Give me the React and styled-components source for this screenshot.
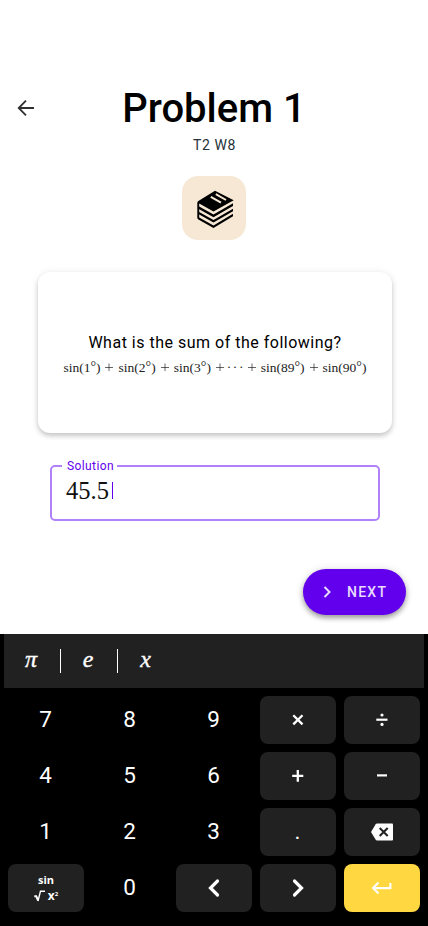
import React from "react";
import styled, { createGlobalStyle } from "styled-components";

const Global = createGlobalStyle`
  *, *::before, *::after { box-sizing: border-box; }
  body { margin: 0; background: #fff; font-family: Roboto, sans-serif; }
  button { font: inherit; border: 0; padding: 0; margin: 0; }
`;
const Screen = styled.div`
  width: 428px; height: 926px; display: flex; flex-direction: column;
  background: #fff; overflow: hidden;
`;
const Content = styled.main`
  height: 634px; padding-top: 84px; display: flex; flex-direction: column; align-items: center;
`;
const Header = styled.header`
  width: 100%; height: 48px; padding: 0 14px; display: grid;
  grid-template-columns: 24px 1fr 24px; grid-template-rows: 48px; align-items: center;
`;
const BackButton = styled.button`
  width: 24px; height: 24px; background: none; color: #303030;
`;
const Title = styled.h1`
  margin: 0; height: 48px; text-align: center; font-size: 40px; line-height: 48px; font-weight: 500;
  color: #000; white-space: nowrap; padding-top: 1px;
`;
const Subtitle = styled.div`
  margin-top: 3px; height: 20px; line-height: 20px; font-size: 14px; letter-spacing: 0.6px; color: #263238;
  padding-left: 1px;
`;
const BookTile = styled.div`
  margin-top: 21px; width: 64px; height: 64px; border-radius: 16px; background: #f7e8d5;
  svg { display: block; }
`;
const Card = styled.section`
  margin: 32px 0 0 2px; width: 354px; height: 161px; padding-top: 60px; border-radius: 12px; background: #fff;
  box-shadow: 0 3px 5px rgba(0,0,0,.2), 0 0 10px rgba(0,0,0,.06);
  display: flex; flex-direction: column; align-items: center;
`;
const Question = styled.p`
  margin: 0; font-size: 16px; line-height: 21px; letter-spacing: 0.5px; color: #000; white-space: nowrap;
`;
const Formula = styled.div`
  margin-top: 4px; display: flex; align-items: center; gap: 4.4px; height: 20px;
  font: 13.5px/20px "Liberation Serif", serif; color: #222;
`;
const Term = styled.span`
  width: ${(p) => p.$w}px; display: flex; justify-content: center; white-space: nowrap;
  letter-spacing: ${(p) => p.$ls || "0"}px;
  sup { font-size: 14px; line-height: 20px; vertical-align: 1px; }
`;
const Field = styled.fieldset`
  margin: 26px 0 0 2px; width: 330px; height: 62px; padding: 0 0 0 14px; border: 2px solid #b181f9;
  border-radius: 5px; min-width: 0;
`;
const Legend = styled.legend`
  margin-left: -4px; padding: 0 3px 0 5px; font-size: 12px; line-height: 14px; letter-spacing: 0.4px; color: #6200ee;
`;
const Answer = styled.div`
  margin-top: 5px; display: flex; align-items: center; height: 26px;
  font: 24.5px/26px "Liberation Serif", serif; color: #111;
`;
const Caret = styled.i`
  width: 1px; height: 17px; margin: -2px 0 0 3px; background: #6200ee;
`;
const NextButton = styled.button`
  align-self: flex-end; margin: 48px 22px 0 0; width: 103px; height: 46px; padding-left: 12px;
  display: flex; align-items: center; gap: 8px; border-radius: 23px; background: #6200ee; color: #e9dcff;
  font-size: 14px; font-weight: 500; letter-spacing: 1.25px;
  box-shadow: 0 3px 5px rgba(0,0,0,.32), 0 1px 8px rgba(0,0,0,.14);
`;
const Keyboard = styled.section`
  height: 292px; padding: 0 4px; background: #000; color: #fff;
`;
const SymbolBar = styled.div`
  height: 54px; background: #212121; display: flex; align-items: center;
`;
const SymbolKey = styled.button`
  width: 57px; height: 24px; background: none; color: #fff;
  border-right: ${(p) => (p.$divider ? "1px solid #fff" : "0")};
  font: italic 24px/20px "Liberation Serif", serif; padding: 0 2px 4px 0;
  -webkit-text-stroke: 0.35px #fff;
`;
const Keys = styled.div`
  padding: 8px 4px; display: grid; grid-template-columns: repeat(5, 76px); grid-auto-rows: 48px; gap: 8px;
`;
const Key = styled.button`
  display: flex; align-items: center; justify-content: center; border-radius: 8px;
  background: ${(p) => ({ dark: "#212121", enter: "#ffd740" })[p.$tone] || "transparent"};
  color: #fff; font-size: 22.5px; line-height: 26px;
  padding: ${(p) => (p.$text ? "0 1px 2px 0" : "0")};
  svg { display: block; }
`;
const FunctionLabel = styled.span`
  display: flex; flex-direction: column; align-items: center;
  font: 700 11px/15px "Open Sans", sans-serif;
`;
const RootRow = styled.span`
  display: flex; align-items: center; height: 17px;
  font: 700 12px/17px "Open Sans", sans-serif;
  svg { margin-right: 3px; }
`;
const Exponent = styled.span`
  align-self: flex-start; margin-top: 3px; font-size: 6px; line-height: 8px;
`;

const Line = ({ d, w = 2, size = 24, cap = "butt" }) => (
  <svg width={size} height={size} viewBox={`0 0 ${size} ${size}`} fill="none" stroke="currentColor" strokeWidth={w} strokeLinecap={cap}>
    <path d={d} />
  </svg>
);
const Books = () => (
  <svg width="64" height="64" viewBox="0 0 64 64">
    <path fill="#000" fillRule="evenodd" d="M33 14.7L51.7 24.3L31.5 35.6L17.2 27.6V30.6L31.5 38.6L51 27.3V29.9L31.5 41.2L17.2 33.2V36L31.5 44L51 32.7V35.3L31.5 46.6L17.2 38.6V41.4L31.5 49.4L51 37.7V40.3L31.5 52L16.4 43.4Q15.3 42.7 15.3 41.4V27Q15.3 25.8 16.4 25.1Z" />
    <path fill="none" stroke="#f7e8d5" strokeWidth="2" d="M28.8 20.8L39 26.6M33.8 18.2L44 24" />
  </svg>
);
const MathTerm = ({ n, w, ls }) => <Term $w={w} $ls={ls}><span>sin({n}<sup>°</sup>)</span></Term>;
const Plus = () => <Line size={8} w={0.7} d="M0 4.5H8M4 .5V8.5" />;

const icons = {
  times: <Line w={2.3} d="M7.3 7.2L16.5 16.4M16.5 7.2L7.3 16.4" />,
  divide: (
    <svg width="24" height="24" viewBox="0 0 24 24" fill="currentColor">
      <path d="M6.3 10.6H17.5V12.8H6.3Z" /><circle cx="12" cy="7" r="1.6" /><circle cx="12" cy="16.4" r="1.6" />
    </svg>
  ),
  plus: <Line w={2.3} d="M6.2 11.8H17.3M11.8 6V17.8" />,
  minus: <Line w={2.2} d="M7 11.4H17" />,
  back: (
    <svg width="24" height="24" viewBox="0 0 24 24">
      <path fill="#fff" d="M22 3.5H7Q6.2 3.5 5.7 4.2L1 12L5.7 19.8Q6.2 20.5 7 20.5H22Q23 20.5 23 19.5V4.5Q23 3.5 22 3.5Z" />
      <path fill="none" stroke="#212121" strokeWidth="2" d="M9.7 8L17.7 16M17.7 8L9.7 16" />
    </svg>
  ),
  left: <Line w={3.2} cap="round" d="M15.5 5L8.5 12L15.5 19" />,
  right: <Line w={3.2} cap="round" d="M8.5 5L15.5 12L8.5 19" />,
  enter: <Line w={2.1} d="M20.4 7V12.1H3.5M8.5 6.6L3 12.1L8.5 17.6" />,
};
const keys = [
  ["7"], ["8"], ["9"], ["times", "dark"], ["divide", "dark"],
  ["4"], ["5"], ["6"], ["plus", "dark"], ["minus", "dark"],
  ["1"], ["2"], ["3"], [".", "dark"], ["back", "dark"],
  ["fn", "dark"], ["0"], ["left", "dark"], ["right", "dark"], ["enter", "enter"],
];

export default function App() {
  return (
    <Screen>
      <Global />
      <Content>
        <Header>
          <BackButton aria-label="Back"><Line w={1.8} d="M20 12H5M12 4.7L4.7 12L12 19.3" /></BackButton>
          <Title>Problem 1</Title>
        </Header>
        <Subtitle>T2 W8</Subtitle>
        <BookTile><Books /></BookTile>
        <Card>
          <Question>What is the sum of the following?</Question>
          <Formula>
            <MathTerm n="1" w={38} /><Plus />
            <MathTerm n="2" w={38.5} /><Plus />
            <MathTerm n="3" w={38.5} /><Plus />
            <Term $w={15} $ls={1.6}>···</Term><Plus />
            <MathTerm n="89" w={45} /><Plus />
            <MathTerm n="90" w={45} />
          </Formula>
        </Card>
        <Field>
          <Legend>Solution</Legend>
          <Answer>45.5<Caret /></Answer>
        </Field>
        <NextButton><Line d="M9.5 7L14.5 12L9.5 17" />NEXT</NextButton>
      </Content>
      <Keyboard>
        <SymbolBar>
          <SymbolKey $divider>π</SymbolKey>
          <SymbolKey $divider>e</SymbolKey>
          <SymbolKey>x</SymbolKey>
        </SymbolBar>
        <Keys>
          {keys.map(([k, tone]) => (
            <Key key={k} $tone={tone} $text={k.length === 1}>
              {k === "fn" ? (
                <FunctionLabel>sin<RootRow>
                  <svg width="11" height="12" viewBox="0 0 11 12" fill="none" stroke="#fff">
                    <path strokeWidth="2" d="M.3 6.2H2.2L4.1 10.5" /><path strokeWidth="1.4" d="M4 11L6.5 1.2H11" />
                  </svg>
                  <span>x</span><Exponent>2</Exponent>
                </RootRow></FunctionLabel>
              ) : icons[k] || k}
            </Key>
          ))}
        </Keys>
      </Keyboard>
    </Screen>
  );
}
